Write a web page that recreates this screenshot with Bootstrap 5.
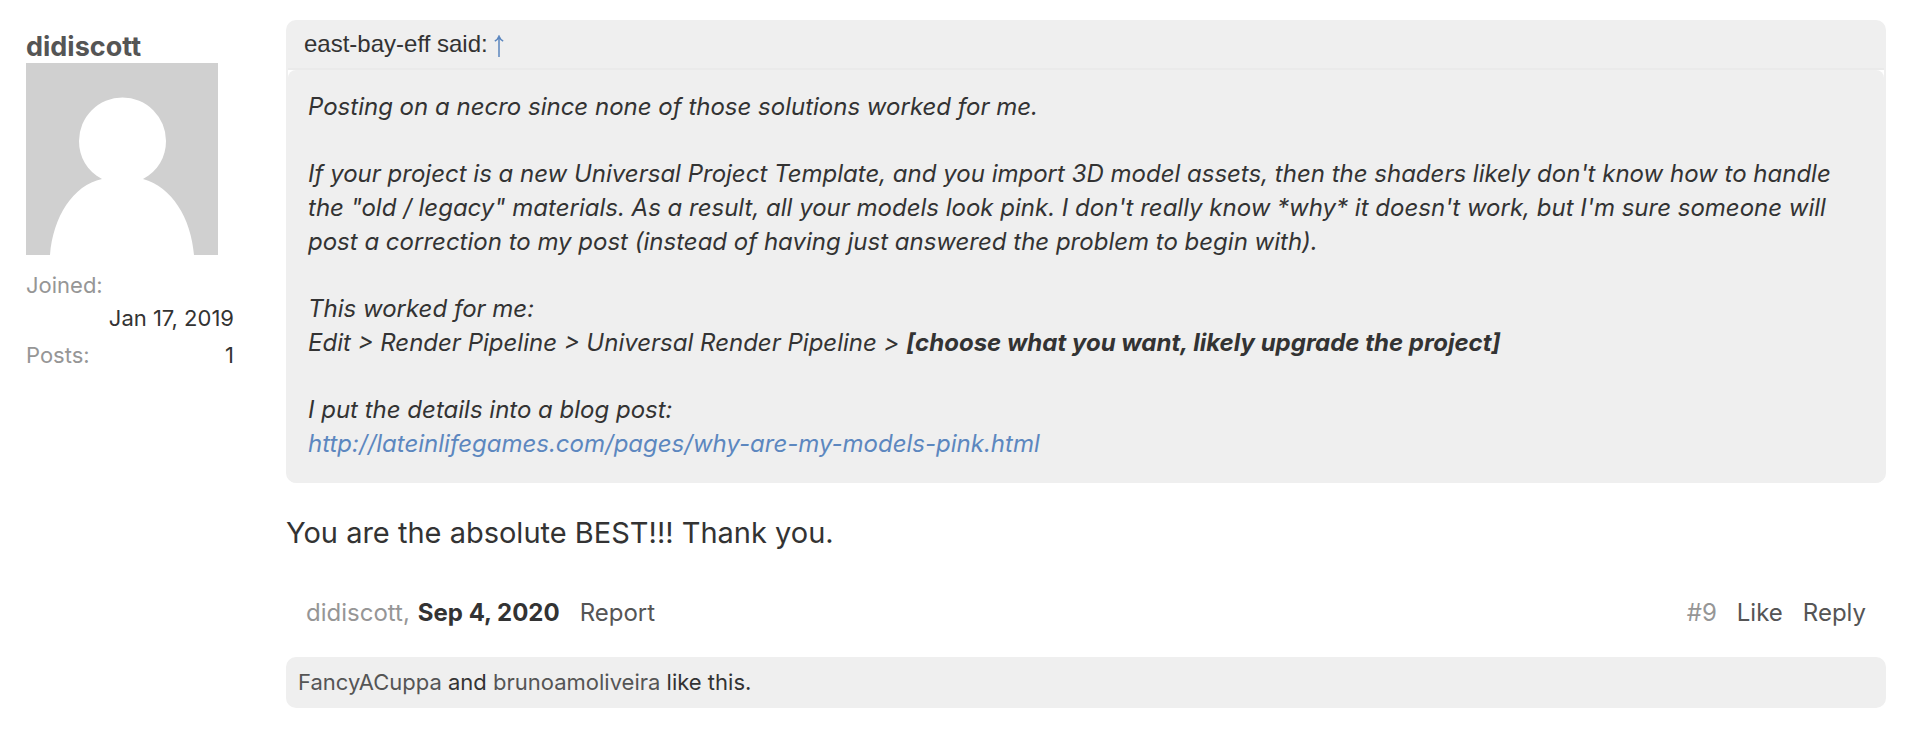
<!DOCTYPE html>
<html lang="en">
<head>
<meta charset="utf-8">
<meta name="viewport" content="width=device-width, initial-scale=1">
<title>Forum post</title>
<link href="https://cdn.jsdelivr.net/npm/bootstrap@5.3.0/dist/css/bootstrap.min.css" rel="stylesheet">
<style>
  body { font-family: Inter, "Liberation Sans", sans-serif; font-size: 24px; line-height: 34px; color: #333; background: #fff; }
  a { color: #555; text-decoration: none; }
  a:hover { text-decoration: underline; }
  .post { padding: 20px 28px 20px 26px; column-gap: 52px; }
  .author { width: 208px; font-size: 22px; padding-top: 10px; }
  .author-name { font-size: 27px; line-height: 33px; font-weight: 700; }
  .avatar { width: 192px; height: 192px; }
  .author dl { margin: 14px 0 0; line-height: 33px; }
  .author dt, .muted { color: #969696; font-weight: 400; }
  .author dd { margin: 0; }
  .stat-row { margin-top: 4px; }
  .quote { background: #efefef; border-radius: 10px; padding: 0 2px; }
  .quote-head { height: 50px; padding: 7px 16px; border-bottom: 2px solid #eaeaea; font-family: "Liberation Sans", Arial, sans-serif; }
  .up-arrow { width: 10px; height: 22px; vertical-align: -5px; }
  .quote-frame { background: #fff; border-radius: 0 0 10px 10px; }
  .quote-body { background: #efefef; border-radius: 8px; padding: 20px 20px 22px; font-style: italic; }
  .quote-body p { margin: 0 0 33px; }
  .quote-body p:last-child { margin: 0; }
  .link-blue { color: #5c87bf; }
  .message { font-size: 29px; line-height: 42px; margin: 29px 0 0; }
  .meta { padding: 0 20px; margin-top: 42px; }
  .likes { background: #efefef; border-radius: 10px; padding: 9px 12px; line-height: 33px; font-size: 22px; margin-top: 27px; }
</style>
</head>
<body>
<article class="post d-flex align-items-start">
  <aside class="author flex-shrink-0">
    <a href="#" class="author-name d-block">didiscott</a>
    <svg class="avatar d-block" viewBox="0 0 192 192" role="img" aria-label="didiscott">
      <rect width="192" height="192" fill="#d0d0d0"/>
      <path fill="#fff" d="M24 192C27 154 47 122 76 116C61 108 53 94 53 78A43.500 43.500 0 0 1 140 78C140 94 132 108 117 116C146 124 165 155 168 192Z"/>
    </svg>
    <dl>
      <div><dt>Joined:</dt><dd class="text-end">Jan 17, 2019</dd></div>
      <div class="stat-row d-flex justify-content-between"><dt>Posts:</dt><dd>1</dd></div>
    </dl>
  </aside>
  <div class="flex-grow-1">
    <blockquote class="quote m-0">
      <div class="quote-head">east-bay-eff said: <a href="#" class="link-blue" aria-label="View quoted post"><svg class="up-arrow" viewBox="0 0 10 22" fill="none" stroke="currentColor" stroke-width="1.500"><path d="M5 1V22M.8 6.200Q3.800 4.500 5 1.200Q6.200 4.500 9.200 6.200"/></svg></a></div>
      <div class="quote-frame">
        <div class="quote-body">
          <p>Posting on a necro since none of those solutions worked for me.</p>
          <p>If your project is a new Universal Project Template, and you import 3D model assets, then the shaders likely don't know how to handle the "old / legacy" materials. As a result, all your models look pink. I don't really know *why* it doesn't work, but I'm sure someone will post a correction to my post (instead of having just answered the problem to begin with).</p>
          <p>This worked for me:<br>Edit &gt; Render Pipeline &gt; Universal Render Pipeline &gt; <b>[choose what you want, likely upgrade the project]</b></p>
          <p>I put the details into a blog post:<br><a href="http://lateinlifegames.com/pages/why-are-my-models-pink.html" class="link-blue">http://lateinlifegames.com/pages/why-are-my-models-pink.html</a></p>
        </div>
      </div>
    </blockquote>
    <p class="message">You are the absolute BEST!!! Thank you.</p>
    <div class="meta d-flex justify-content-between">
      <div class="d-flex"><a href="#" class="muted">didiscott,</a><b class="ms-2">Sep 4, 2020</b><a href="#" class="ms-3 ps-1">Report</a></div>
      <div class="d-flex"><a href="#" class="muted">#9</a><a href="#" class="ms-3 ps-1">Like</a><a href="#" class="ms-3 ps-1">Reply</a></div>
    </div>
    <div class="likes"><a href="#">FancyACuppa</a> and <a href="#">brunoamoliveira</a> like this.</div>
  </div>
</article>
<script src="https://cdn.jsdelivr.net/npm/bootstrap@5.3.0/dist/js/bootstrap.bundle.min.js"></script>
</body>
</html>
